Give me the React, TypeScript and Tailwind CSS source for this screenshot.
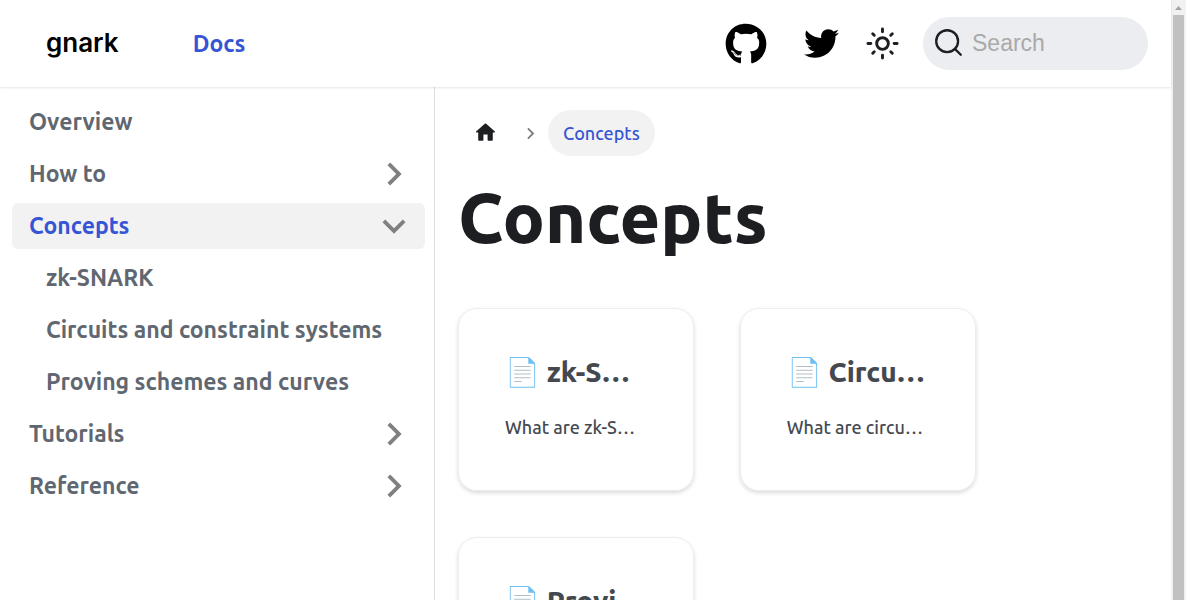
import { FaGithub, FaTwitter } from "react-icons/fa";

const CARET = "M7.41 15.41L12 10.83l4.590 4.580L18 14l-6-6-6 6z";

type MenuItem = { label: string; caret?: "right" | "down"; active?: boolean; nested?: boolean };

const menu: MenuItem[] = [
  { label: "Overview" },
  { label: "How to", caret: "right" },
  { label: "Concepts", caret: "down", active: true },
  { label: "zk-SNARK", nested: true },
  { label: "Circuits and constraint systems", nested: true },
  { label: "Proving schemes and curves", nested: true },
  { label: "Tutorials", caret: "right" },
  { label: "Reference", caret: "right" },
];

const cards = [
  { href: "#zk-snark", title: "zk-S…", text: "What are zk-S…" },
  { href: "#circuits", title: "Circu…", text: "What are circu…" },
  { href: "#schemes", title: "Provi…", text: "What are prov…" },
];

function Sun() {
  return (
    <svg viewBox="0 0 24 24" className="size-[35px]" fill="none" stroke="currentColor" strokeWidth="2" strokeLinecap="round">
      <circle cx="12" cy="12" r="4" />
      <path d="M2 12h2M20 12h2M12 2v2M12 20v2M5.280 5.280l1.060 1.060M17.660 17.660l1.060 1.060M5.280 18.720l1.060-1.060M17.660 6.340l1.060-1.060" />
    </svg>
  );
}

function SearchIcon() {
  return (
    <svg viewBox="0 0 20 20" className="size-[29px] shrink-0" fill="none" stroke="currentColor" strokeWidth="1.600" strokeLinecap="round">
      <circle cx="9.060" cy="9.060" r="7.530" />
      <path d="M14.386 14.386l4.088 4.088" />
    </svg>
  );
}

function Header() {
  return (
    <header className="z-10 flex h-[87px] shrink-0 items-center bg-white pr-[23px] pl-[46px] shadow-[0_1px_2px_0_rgba(0,0,0,0.1)]">
      <a href="#" className="pb-0.5 font-['Inter','Liberation_Sans',sans-serif] text-[26px] font-semibold text-black">
        gnark
      </a>
      <nav className="ml-[74px]">
        <a href="#docs" className="font-semibold text-[#3655d4]">Docs</a>
      </nav>
      <div className="ml-auto flex items-center">
        <a href="#github" aria-label="GitHub repository" className="text-black">
          <FaGithub className="size-[42px]" />
        </a>
        <a href="#twitter" aria-label="Twitter" className="ml-[37px] text-black">
          <FaTwitter className="size-[35px]" />
        </a>
        <button type="button" aria-label="Switch between dark and light mode" className="ml-[26px]">
          <Sun />
        </button>
        <label className="ml-[23px] flex h-[53px] w-[225px] items-center gap-[9px] rounded-full bg-[#ebedf0] pr-4 pb-0.5 pl-[11px]">
          <SearchIcon />
          <input
            type="search"
            aria-label="Search"
            placeholder="Search"
            className="w-full min-w-0 bg-transparent font-['Liberation_Sans',Arial,sans-serif] text-[23px] outline-none placeholder:text-[#a9a9a9]"
          />
        </label>
      </div>
    </header>
  );
}

function Sidebar() {
  return (
    <nav aria-label="Docs sidebar" className="w-[435px] shrink-0 border-r border-[#dadde1] py-3 pr-[9px] pl-3">
      <ul className="flex flex-col gap-1.5">
        {menu.map((item) => (
          <li
            key={item.label}
            className={`flex h-[46px] items-center justify-between rounded-md pr-2 font-semibold ${item.nested ? "pl-[34px]" : "pl-[17px]"} ${
              item.active ? "bg-[#f2f2f2] text-[#3655d4]" : "text-[#606770]"
            }`}
          >
            <a href={`#${item.label}`} className="whitespace-nowrap">{item.label}</a>
            {item.caret && (
              <button type="button" aria-label={`Toggle ${item.label}`} className="text-[#808080]">
                <svg viewBox="0 0 24 24" className={`size-[46px] ${item.caret === "down" ? "rotate-180" : "rotate-90"}`}>
                  <path fill="currentColor" d={CARET} />
                </svg>
              </button>
            )}
          </li>
        ))}
      </ul>
    </nav>
  );
}

function Breadcrumbs() {
  return (
    <nav aria-label="Breadcrumbs">
      <ul className="flex items-center text-[18px] leading-[26px] font-medium">
        <li>
          <a href="#home" aria-label="Home page" className="flex h-[46px] items-center px-[15px] pb-0.5">
            <svg viewBox="0 0 24 24" className="size-[25px]">
              <path
                fill="currentColor"
                d="M10 19v-5h4v5c0 .55.45 1 1 1h3c.55 0 1-.45 1-1v-7h1.700c.46 0 .68-.57.33-.87L12.670 3.600c-.38-.34-.96-.34-1.340 0l-8.360 7.530c-.34.3-.13.870.33.870H5v7c0 .55.45 1 1 1h3c.55 0 1-.45 1-1z"
              />
            </svg>
          </a>
        </li>
        <li className="px-1.5" aria-hidden="true">
          <svg viewBox="0 0 24 24" className="size-[23px] rotate-90 text-[#808080]">
            <path fill="currentColor" d={CARET} />
          </svg>
        </li>
        <li className="flex h-[46px] items-center rounded-full bg-[#f2f2f2] px-[15px] text-[#3655d4]">Concepts</li>
      </ul>
    </nav>
  );
}

function Scrollbar() {
  return (
    <div aria-hidden="true" className="flex w-[15px] shrink-0 flex-col items-center bg-[#f1f1f1]">
      <svg viewBox="0 0 15 15" className="size-[15px] shrink-0">
        <path d="M4 10L7.500 6L11 10z" fill="#a3a3a3" />
      </svg>
      <div className="w-[11px] grow bg-[#c1c1c1]" />
    </div>
  );
}

export default function App() {
  return (
    <div className="flex h-screen bg-white font-['Ubuntu','Noto_Sans',sans-serif] text-[23px] leading-[30px] text-[#1c1e21]">
      <div className="flex min-w-0 grow flex-col">
        <Header />
        <div className="flex min-h-0 grow">
          <Sidebar />
          <main className="min-w-0 grow overflow-y-auto px-[23px] pt-[23px] [scrollbar-width:none]">
            <Breadcrumbs />
            <h1 className="mt-[17px] text-[70px] leading-[88px] font-extrabold">Concepts</h1>
            <section className="mt-[47px] grid w-3/4 grid-cols-2 gap-[46px] pb-[46px]">
              {cards.map((card) => (
                <a
                  key={card.href}
                  href={card.href}
                  className="h-[183px] rounded-[19px] border border-[#ebedf0] p-[46px] text-[#444950] shadow-[0_2px_4px_0_rgba(0,0,0,0.15)]"
                >
                  <h2 className="text-[28px] leading-[34px] font-extrabold whitespace-nowrap">📄️ {card.title}</h2>
                  <p className="mt-[23px] text-[18px] leading-[30px] font-medium whitespace-nowrap">{card.text}</p>
                </a>
              ))}
            </section>
          </main>
        </div>
      </div>
      <Scrollbar />
    </div>
  );
}
